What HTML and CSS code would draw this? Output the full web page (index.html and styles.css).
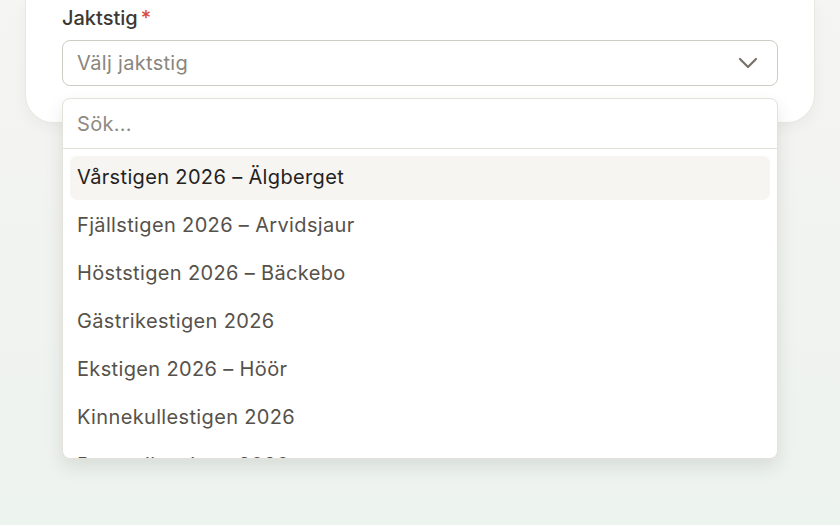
FILE: index.html
```html
<!DOCTYPE html>
<html lang="sv">
<head>
<meta charset="utf-8">
<title>Jaktstig</title>
<link rel="stylesheet" href="styles.css">
</head>
<body>
<div class="page">
  <div class="card">
    <label class="label">Jaktstig<span class="req">*</span></label>
    <div class="field">
      <div class="select">
        <span class="placeholder">Välj jaktstig</span>
        <svg class="chev" width="20" height="12" viewBox="0 0 20 12"><path d="M2 2 L10 10 L18 2" fill="none" stroke="#76726a" stroke-width="2.2" stroke-linecap="round" stroke-linejoin="round"/></svg>
      </div>
      <div class="dropdown">
        <div class="search">Sök...</div>
        <ul class="list">
          <li class="item active">Vårstigen 2026 – Älgberget</li>
          <li class="item">Fjällstigen 2026 – Arvidsjaur</li>
          <li class="item">Höststigen 2026 – Bäckebo</li>
          <li class="item">Gästrikestigen 2026</li>
          <li class="item">Ekstigen 2026 – Höör</li>
          <li class="item">Kinnekullestigen 2026</li>
          <li class="item">Bergsviksstigen 2026</li>
        </ul>
      </div>
    </div>
  </div>
</div>
</body>
</html>
```
FILE: styles.css
```css
* { box-sizing: border-box; }
html, body { margin: 0; height: 100%; }
body {
  font-family: Inter, "Noto Sans", sans-serif;
  background: linear-gradient(180deg, #f5f5f3 0%, #f1f3f0 50%, #edf3ee 100%);
  overflow: hidden;
}
.page { padding: 0 25px; }
.card {
  width: 790px;
  background: #fff;
  border: 1px solid #e9e7e1;
  border-top: none;
  border-radius: 0 0 28px 28px;
  padding: 6px 36px 36px;
  box-shadow: 0 4px 14px rgba(60, 60, 50, 0.05);
}
.label {
  display: block;
  font-size: 20px;
  line-height: 24px;
  font-weight: 500;
  color: #3b3833;
  margin-bottom: 10px;
}
.req { color: #d94a3f; margin-left: 3px; }
.field { position: relative; }
.select {
  height: 46px;
  border: 1px solid #cfccc4;
  border-radius: 8px;
  display: flex;
  align-items: center;
  justify-content: space-between;
  padding: 0 19px 0 14px;
}
.placeholder { font-size: 20px; letter-spacing: 0.3px; color: #8a867e; }
.chev { display: block; }
.dropdown {
  position: absolute;
  top: 58px;
  left: 0;
  width: 716px;
  height: 361px;
  background: #fff;
  border: 1px solid #e4e1db;
  border-radius: 8px;
  overflow: hidden;
  box-shadow: 0 8px 18px rgba(40, 45, 40, 0.11);
  z-index: 2;
}
.search {
  height: 50px;
  border-bottom: 1px solid #e4e1db;
  display: flex;
  align-items: center;
  padding-left: 14px;
  font-size: 20px;
  letter-spacing: 0.3px;
  color: #8f8a82;
}
.list {
  list-style: none;
  margin: 0;
  padding: 7px 7px 0;
  display: flex;
  flex-direction: column;
  gap: 4px;
}
.item {
  height: 44px;
  flex: none;
  display: flex;
  align-items: center;
  padding: 0 0 2px 7px;
  border-radius: 7px;
  font-size: 20px;
  letter-spacing: 0.35px;
  color: #56524b;
}
.item.active { background: #f6f5f2; color: #24221f; }
```
